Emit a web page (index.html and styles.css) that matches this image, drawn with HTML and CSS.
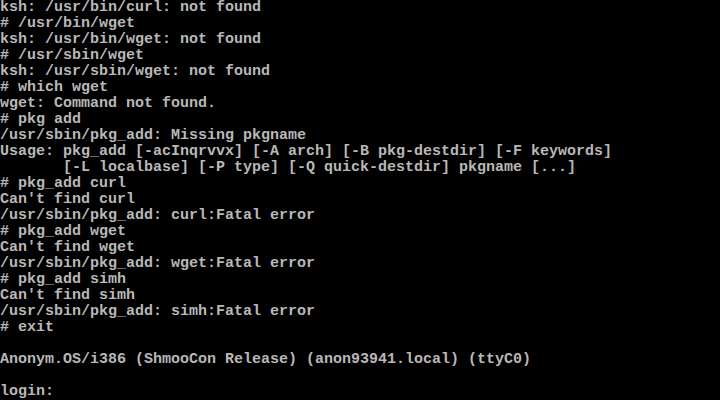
FILE: index.html
```html
<!DOCTYPE html>
<html lang="en">
<head>
    <meta charset="UTF-8">
    <title>ttyC0</title>
    <link rel="stylesheet" href="styles.css">
</head>
<body>
    <pre class="console">ksh: /usr/bin/curl: not found
# /usr/bin/wget
ksh: /usr/bin/wget: not found
# /usr/sbin/wget
ksh: /usr/sbin/wget: not found
# which wget
wget: Command not found.
# pkg add
/usr/sbin/pkg_add: Missing pkgname
Usage: pkg_add [-acInqrvvx] [-A arch] [-B pkg-destdir] [-F keywords]
       [-L localbase] [-P type] [-Q quick-destdir] pkgname [...]
# pkg_add curl
Can't find curl
/usr/sbin/pkg_add: curl:Fatal error
# pkg_add wget
Can't find wget
/usr/sbin/pkg_add: wget:Fatal error
# pkg_add simh
Can't find simh
/usr/sbin/pkg_add: simh:Fatal error
# exit

Anonym.OS/i386 (ShmooCon Release) (anon93941.local) (ttyC0)

login: </pre>
</body>
</html>
```

FILE: styles.css
```css
html, body {
    margin: 0;
    background: #000;
}
.console {
    margin: 0;
    padding: 0;
    width: 720px;
    height: 400px;
    overflow: hidden;
    color: #b8b8b8;
    font-family: "Liberation Mono", monospace;
    font-size: 15px;
    font-weight: bold;
    line-height: 16px;
}
```
